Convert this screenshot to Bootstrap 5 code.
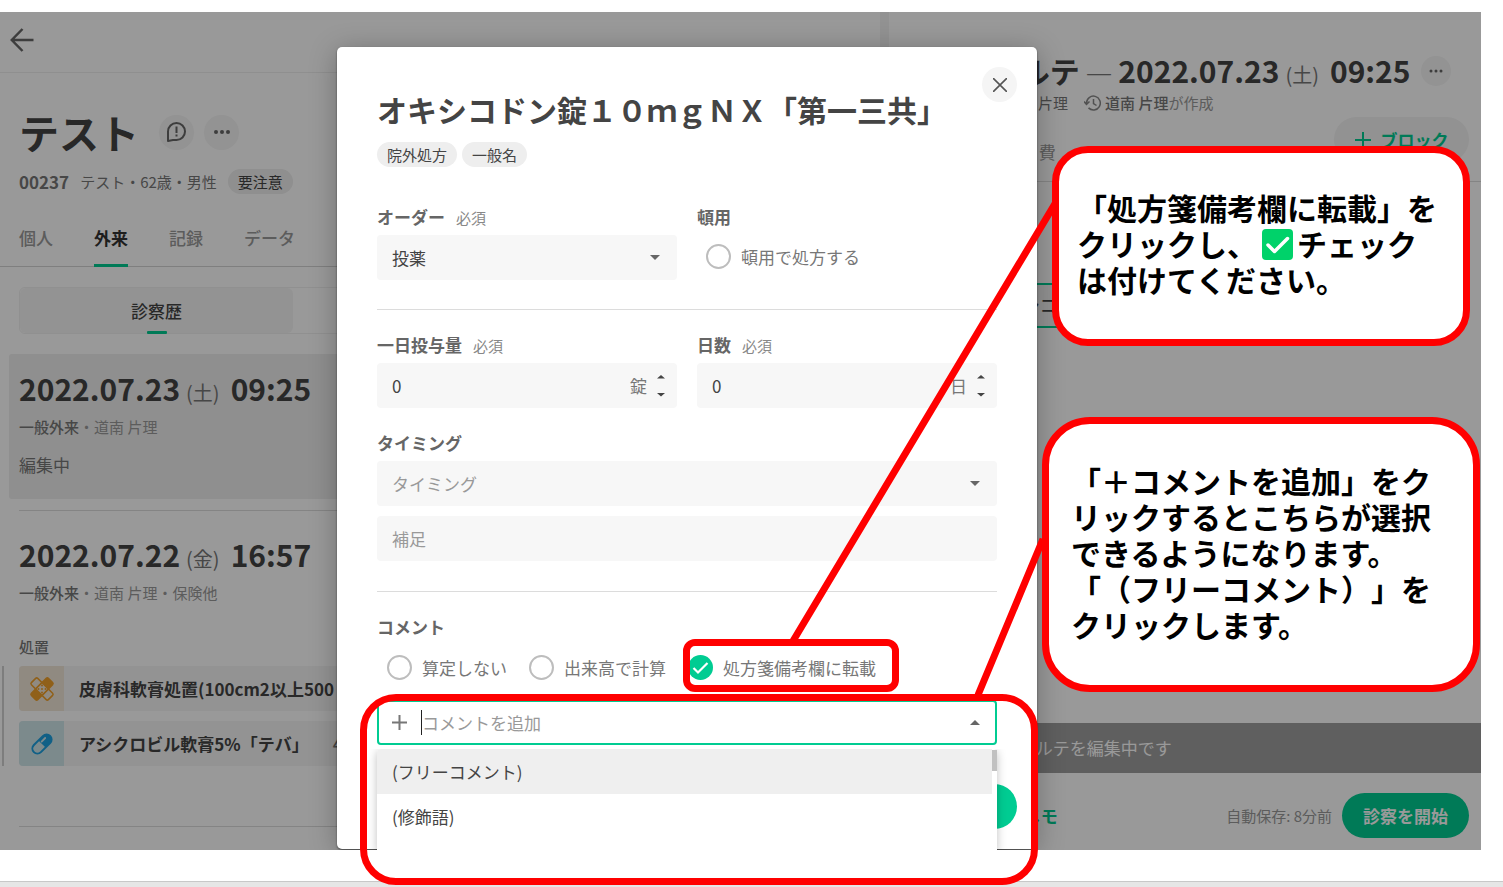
<!DOCTYPE html>
<html lang="ja">
<head>
<meta charset="utf-8">
<meta name="viewport" content="width=device-width, initial-scale=1">
<title>カルテ</title>
<link href="https://cdn.jsdelivr.net/npm/bootstrap@5.3.0/dist/css/bootstrap.min.css" rel="stylesheet">
<style>
:root { --teal: #00cc92; --ink: #444; --note: #f00; }
body { font-family: "Noto Sans CJK JP", sans-serif; font-size: 17px; line-height: 24px; color: var(--ink); background: #fff; text-spacing-trim: space-all; overflow-x: hidden; }
button, input, select { font: inherit; }
.t-sm { font-size: 15px; line-height: 20px; }
.t-date { font-size: 30px; line-height: 34px; height: 36px; font-weight: 700; display: flex; align-items: baseline; gap: 6px; white-space: nowrap; }
.t-day { font-size: 20px; line-height: 20px; font-weight: 400; color: #777; margin-right: 5px; }
.t-dash { font-weight: 300; color: #777; }
.c-soft { color: #999; }
.c-mid { color: #777; }

/* page frame */
.stage { position: relative; margin-top: 12px; margin-bottom: 31px; }
.app { margin-right: 22px; overflow: hidden; position: relative; }
.page-edge { height: 6px; background: #e6e6e6; border-top: 1px solid #c8c8c8; }
.shade { position: absolute; inset: 0; background: rgba(0,0,0,.4); }
.pane-l { flex: 0 0 59.4%; min-width: 0; }
.splitter { width: 9px; background: #f3f3f3; }
.rule { height: 1px; background: #dcdcdc; }

/* patient pane */
.topbar { height: 61px; border-bottom: 1px solid #eee; padding: 0 0 5px 10px; }
.gutter { padding-left: 19px; }
.patient-row { margin-top: 35px; }
.patient { font-size: 40px; line-height: 48px; font-weight: 700; margin: 0 20px 0 0; }
.round { width: 35px; height: 35px; border: 0; border-radius: 50%; padding: 0; background: #f5f5f5; color: #666; display: flex; align-items: center; justify-content: center; flex: none; }
.round + .round { margin-left: 10px; }
.round.tiny { width: 30px; height: 30px; }
.pill { height: 25px; border-radius: 13px; padding: 0 10px; background: #eee; font-size: 15px; line-height: 25px; }
.patient-meta { margin-top: 13px; gap: 11px; }
.tabs { gap: 41px; border-bottom: 1px solid #d4d4d4; margin-top: 32px; font-weight: 500; }
.tabs a { height: 40px; color: #999; text-decoration: none; position: relative; }
.tabs a.on { color: #333; font-weight: 700; }
.tabs a.on::after { content: ""; position: absolute; left: 0; right: 0; bottom: -1px; height: 3px; background: var(--teal); }
.segment { margin-top: 20px; height: 47px; border: 1px solid #f0f0f0; border-radius: 6px; }
.segment button { width: 273px; border: 0; border-radius: 6px; background: #f5f5f5; color: var(--ink); font-weight: 500; position: relative; }
.segment button::after { content: ""; position: absolute; left: 50%; margin-left: -10px; bottom: -1px; width: 20px; height: 3px; border-radius: 1px; background: var(--teal); }
.visit-now { margin: 20px 0 11px 9px; padding: 17px 10px 22px; background: #eee; border-radius: 3px; }
.orders { position: relative; margin-top: 9px; margin-bottom: 60px; gap: 10px; }
.orders::before { content: ""; position: absolute; left: -17px; top: 0; bottom: 0; width: 2px; background: #d0d0d0; }
.order { height: 45px; background: #f5f5f5; border-radius: 4px; overflow: hidden; font-weight: 700; white-space: nowrap; }
.order-ico { width: 45px; height: 45px; flex: none; display: flex; align-items: center; justify-content: center; margin-right: 15px; }

/* chart pane */
.chart-head { padding: 41px 30px 0 101px; }
.chart-meta { margin: 4px 0 0 15px; }
.chart-tabs { margin-top: 4px; height: 65px; border-bottom: 1px solid #dcdcdc; padding: 0 12px 0 133px; }
.add-block { width: 135px; height: 45px; border: 0; border-radius: 23px; background: #f3f3f3; color: var(--teal); font-weight: 700; gap: 10px; }
.block-card { margin: 101px 40px 0 70px; height: 45px; border: 2px solid var(--teal); padding: 8px 28px; background: #f3f3f3; font-weight: 500; }
.notice { height: 50px; background: #9e9e9e; color: #fff; padding-left: 130px; }
.chart-foot { height: 77px; padding: 8px 12px 0 135px; }
.start { width: 127px; height: 45px; border: 0; border-radius: 23px; background: var(--teal); color: #fff; font-weight: 700; }

/* prescription dialog */
.rx { position: absolute; left: 337px; top: 35px; bottom: 1px; width: 700px; background: #fff; border-radius: 5px; padding: 42px 40px 0; box-shadow: 0 1px 2px rgba(0,0,0,.5), 0 4px 28px rgba(0,0,0,.28); }
.rx h2 { font-size: 30px; line-height: 40px; font-weight: 700; margin: 0 0 13px; white-space: nowrap; }
.rx-close { position: absolute; right: 20px; top: 20px; }
.cap { display: block; height: 24px; font-weight: 700; color: #666; margin-bottom: 6px; }
.cap small { font-size: 15px; line-height: 15px; font-weight: 400; color: #888; margin-left: 11px; }
.cols { display: grid; grid-template-columns: 1fr 1fr; gap: 20px; }
.box { display: flex; align-items: center; width: 100%; height: 45px; background-color: #f7f7f7; border: 0; border-radius: 4px; padding: 0 15px; color: var(--ink); }
.box input { flex: 1; min-width: 0; border: 0; background: none; padding: 0; color: inherit; outline: 0; }
.box::placeholder, .box input::placeholder { color: #999; opacity: 1; }
.spin { margin: 0 -3px 0 10px; }
select.box { appearance: none; background-image: url("data:image/svg+xml,%3Csvg xmlns='http://www.w3.org/2000/svg' width='10' height='5'%3E%3Cpath d='M0 0h10L5 5z' fill='%23666'/%3E%3C/svg%3E"); background-repeat: no-repeat; background-position: right 17px center; }
select.empty { color: #999; }
.choice { display: flex; align-items: center; height: 25px; gap: 10px; color: #777; white-space: nowrap; }
.choice input { appearance: none; width: 25px; height: 25px; border: 2px solid #bdbdbd; border-radius: 50%; margin: 0; flex: none; }
.choice input:checked { border: 0; background: var(--teal) url("data:image/svg+xml,%3Csvg xmlns='http://www.w3.org/2000/svg' viewBox='0 0 25 25'%3E%3Cpath d='M5.500 13l4.500 4.500L19.500 8' fill='none' stroke='white' stroke-width='2.200'/%3E%3C/svg%3E"); }
.combo { position: relative; margin-top: 20px; }
.combo .box { background: #fff; border: 2px solid var(--teal); padding: 0 13px; }
.caret-bar { width: 1px; height: 25px; background: #222; margin-left: 14px; }
.options { position: absolute; left: 0; right: 0; top: 49px; height: 102px; background: #fff; box-shadow: 0 2px 10px rgba(0,0,0,.25); clip-path: inset(0 -20px 0 -20px); border-radius: 4px 4px 0 0; padding-right: 5px; z-index: 2; }
.options button { display: block; width: 100%; height: 45px; border: 0; background: #fff; color: var(--ink); text-align: left; padding: 0 15px; }
.options button.on { background: #efefef; border-radius: 4px 0 0 0; }
.options::after { content: ""; position: absolute; right: 0; top: 1px; width: 5px; height: 21px; background: #c1c1c1; }
.save { position: absolute; right: 20px; bottom: 20px; width: 100px; height: 45px; border: 0; border-radius: 23px; background: var(--teal); }

/* instruction marks laid over the screen */
.marks { position: absolute; left: 0; top: 0; pointer-events: none; z-index: 5; }
.ring { position: absolute; border: 7px solid var(--note); pointer-events: none; z-index: 5; }
.ring-check { left: 683px; top: 627px; width: 216px; height: 53px; border-radius: 12px; }
.ring-list { left: 360px; top: 682px; width: 678px; height: 191px; border-radius: 36px; }
.say { position: absolute; border: 7px solid var(--note); background: #fff; color: #000; font-size: 30px; line-height: 36px; font-weight: 700; display: flex; align-items: center; white-space: nowrap; z-index: 6; padding-bottom: 6px; }
.say p { margin: 0; }
.say-1 { left: 1052px; top: 134px; width: 418px; height: 200px; border-radius: 36px; padding-left: 18px; }
.say-2 { left: 1042px; top: 405px; width: 438px; height: 275px; border-radius: 48px; padding-left: 22px; }
.tick { display: inline-block; vertical-align: -4px; margin: 0 4px 0 5px; }
</style>
</head>
<body class="d-flex flex-column min-vh-100">
<main class="stage flex-grow-1 d-flex flex-column">
  <div class="app flex-grow-1 d-flex">
    <section class="pane-l">
      <div class="topbar d-flex align-items-center">
        <svg width="24" height="24" viewBox="0 0 24 24" fill="none" stroke="#666" stroke-width="2.500"><path d="M23.500 12H2M12.500 1L1.800 12l10.700 11"/></svg>
      </div>
      <div class="gutter">
        <div class="patient-row d-flex align-items-center">
          <h1 class="patient">テスト</h1>
          <button class="round" aria-label="注意"><svg width="21" height="22" viewBox="0 0 21 22" fill="none" stroke="#666" stroke-width="2"><path d="M2 20V10.500a8.500 8.500 0 1 1 8.500 8.500H7z" stroke-linejoin="round"/><path d="M10.500 5.500v6.500M10.500 13.500v2"/></svg></button>
          <button class="round" aria-label="メニュー"><svg width="18" height="4" fill="#666"><circle cx="3" cy="2" r="2"/><circle cx="9" cy="2" r="2"/><circle cx="15" cy="2" r="2"/></svg></button>
        </div>
        <div class="patient-meta d-flex align-items-center">
          <b class="c-mid">00237</b><span class="t-sm c-mid">テスト・62歳・男性</span><span class="pill">要注意</span>
        </div>
      </div>
      <nav class="tabs gutter d-flex"><a href="#">個人</a><a href="#" class="on">外来</a><a href="#">記録</a><a href="#">データ</a></nav>
      <div class="gutter"><div class="segment d-flex"><button>診察歴</button></div></div>
      <article class="visit-now">
        <div class="t-date"><span>2022.07.23</span><span class="t-day">(土)</span><span>09:25</span></div>
        <div class="t-sm c-soft" style="margin-top:10px"><b class="fw-medium c-mid">一般外来</b>・道南 片理</div>
        <div class="c-mid" style="margin-top:16px">編集中</div>
      </article>
      <article class="gutter">
        <div class="rule"></div>
        <div class="t-date" style="margin-top:26px"><span>2022.07.22</span><span class="t-day">(金)</span><span>16:57</span></div>
        <div class="t-sm c-soft" style="margin-top:10px"><b class="fw-medium c-mid">一般外来</b>・道南 片理・保険他</div>
        <div class="t-sm c-mid fw-medium" style="margin-top:34px">処置</div>
        <div class="orders d-flex flex-column">
          <div class="order d-flex align-items-center"><span class="order-ico" style="background:#f1e6d8"><svg width="26" height="26" viewBox="0 0 26 26"><g transform="rotate(45 13 13)" stroke="#f0a02a" stroke-width="1.500"><rect x="1" y="8.500" width="24" height="9" rx="1.500" fill="none"/><rect x="8.500" y="1" width="9" height="24" rx="1.500" fill="#f0a02a"/><rect x="8.500" y="8.500" width="9" height="9" fill="#f1e6d8"/></g><g fill="#f0a02a"><circle cx="13" cy="9.500" r="1"/><circle cx="13" cy="13" r="1"/><circle cx="13" cy="16.500" r="1"/><circle cx="9.500" cy="13" r="1"/><circle cx="16.500" cy="13" r="1"/></g></svg></span>皮膚科軟膏処置(100cm2以上500</div>
          <div class="order d-flex align-items-center"><span class="order-ico" style="background:#cfe6ea"><svg width="24" height="24" viewBox="0 0 24 24"><g transform="rotate(45 12 12)"><path d="M7 12V5.500a5 5 0 0 1 10 0V12z" fill="#1da1e0"/><rect x="7" y="0.500" width="10" height="23" rx="5" fill="none" stroke="#1da1e0" stroke-width="2"/><path d="M10 5.500v5" stroke="#cfe6ea" stroke-width="1.800" stroke-linecap="round"/></g></svg></span>アシクロビル軟膏5%「テバ」<span class="c-mid fw-medium ms-4">4</span></div>
        </div>
        <div class="rule"></div>
      </article>
    </section>
    <div class="splitter"></div>
    <section class="flex-grow-1 d-flex flex-column">
      <div class="chart-head">
        <div class="d-flex align-items-center justify-content-between">
          <div class="t-date"><span>カルテ</span><span class="t-dash">—</span><span>2022.07.23</span><span class="t-day">(土)</span><span>09:25</span></div>
          <button class="round tiny" aria-label="メニュー"><svg width="14" height="4" fill="#666"><circle cx="2" cy="2" r="1.500"/><circle cx="7" cy="2" r="1.500"/><circle cx="12" cy="2" r="1.500"/></svg></button>
        </div>
        <div class="chart-meta t-sm c-mid d-flex align-items-center">道南 片理
          <svg class="ms-3 me-1" width="17" height="16" viewBox="0 0 17 16" fill="none" stroke="#888" stroke-width="1.500"><path d="M2.500 8.500V8a6.900 6.900 0 1 1 2 4.900M0 6.500l2.500 3L5.500 6.500M9.500 4v4.500l3 2"/></svg>
          <span class="fw-medium">道南 片理</span><span class="c-soft">が作成</span></div>
      </div>
      <div class="chart-tabs d-flex align-items-start justify-content-between">
        <a href="#" class="c-soft text-decoration-none" style="margin-top:23px">自費</a>
        <button class="add-block d-flex align-items-center justify-content-center"><svg width="16" height="16" stroke="#00cc92" stroke-width="2"><path d="M8 0v16M0 8h16"/></svg>ブロック</button>
      </div>
      <div class="block-card">オキシコ</div>
      <div class="notice mt-auto d-flex align-items-center">カルテを編集中です</div>
      <div class="chart-foot d-flex align-items-center flex-nowrap">
        <a href="#" class="text-decoration-none fw-bold me-auto" style="color:var(--teal)">メモ</a>
        <span class="t-sm c-soft" style="margin-right:10px">自動保存: 8分前</span>
        <button class="start">診察を開始</button>
      </div>
    </section>
    <div class="shade"></div>
    <form class="rx" role="dialog" aria-labelledby="rxname">
      <button type="button" class="round rx-close" aria-label="閉じる"><svg width="14" height="14" stroke="#555" stroke-width="1.600"><path d="M0 0l14 14M14 0L0 14"/></svg></button>
      <h2 id="rxname">オキシコドン錠１０ｍｇＮＸ「第一三共」</h2>
      <div class="d-flex" style="gap:5px"><span class="pill">院外処方</span><span class="pill">一般名</span></div>
      <div class="cols" style="margin:38px 0 29px">
        <div><label class="cap" for="f-order">オーダー<small>必須</small></label>
          <select class="box" id="f-order"><option>投薬</option></select></div>
        <div><span class="cap">頓用</span>
          <label class="choice" style="margin:15px 0 0 9px"><input type="checkbox">頓用で処方する</label></div>
      </div>
      <div class="rule"></div>
      <div class="cols" style="margin:23px 0">
        <div><label class="cap" for="f-dose">一日投与量<small>必須</small></label>
          <div class="box"><input id="f-dose" type="text" inputmode="numeric" value="0"><span class="c-mid">錠</span><svg class="spin" width="8" height="24" fill="#444"><path d="M0 4.500L4 1l4 3.500zM0 19l4 3.500L8 19z"/></svg></div></div>
        <div><label class="cap" for="f-days">日数<small>必須</small></label>
          <div class="box"><input id="f-days" type="text" inputmode="numeric" value="0"><span class="c-mid">日</span><svg class="spin" width="8" height="24" fill="#444"><path d="M0 4.500L4 1l4 3.500zM0 19l4 3.500L8 19z"/></svg></div></div>
      </div>
      <label class="cap" for="f-when">タイミング</label>
      <select class="box empty" id="f-when"><option>タイミング</option></select>
      <input class="box" type="text" placeholder="補足" aria-label="補足" style="margin:10px 0 30px">
      <div class="rule"></div>
      <label class="cap" for="f-comment" style="margin:23px 0 16px">コメント</label>
      <div class="d-flex" style="gap:22px;margin-left:10px">
        <label class="choice"><input type="checkbox">算定しない</label>
        <label class="choice"><input type="checkbox">出来高で計算</label>
        <label class="choice"><input type="checkbox" checked>処方箋備考欄に転載</label>
      </div>
      <div class="combo">
        <div class="box"><svg width="15" height="15" stroke="#777" stroke-width="2"><path d="M7.500 0v15M0 7.500h15"/></svg><span class="caret-bar"></span><input id="f-comment" type="text" placeholder="コメントを追加"><svg style="margin-right:2px" width="10" height="5"><path d="M0 5h10L5 0z" fill="#666"/></svg></div>
        <div class="options"><button type="button" class="on">(フリーコメント)</button><button type="button">(修飾語)</button></div>
      </div>
      <button type="button" class="save" aria-label="保存"></button>
    </form>
  </div>
  <svg class="marks" width="1100" height="720" stroke="#f00" stroke-width="7"><path d="M1056 190L793 629M1043 527L978 683"/></svg>
  <div class="ring ring-check"></div>
  <div class="ring ring-list"></div>
  <aside class="say say-1"><p>「処方箋備考欄に転載」を<br>クリックし、<svg class="tick" width="31" height="31" viewBox="0 0 31 31"><rect width="31" height="31" rx="4" fill="#00d26a"/><path d="M6 16l6.500 6.500L25.500 9.500" fill="none" stroke="#fff" stroke-width="3.500" stroke-linecap="round" stroke-linejoin="round"/></svg>チェック<br>は付けてください。</p></aside>
  <aside class="say say-2"><p>「＋コメントを追加」をク<br>リックするとこちらが選択<br>できるようになります。<br>「（フリーコメント）」を<br>クリックします。</p></aside>
</main>
<footer class="page-edge"></footer>
<script src="https://cdn.jsdelivr.net/npm/bootstrap@5.3.0/dist/js/bootstrap.bundle.min.js"></script>
</body>
</html>
